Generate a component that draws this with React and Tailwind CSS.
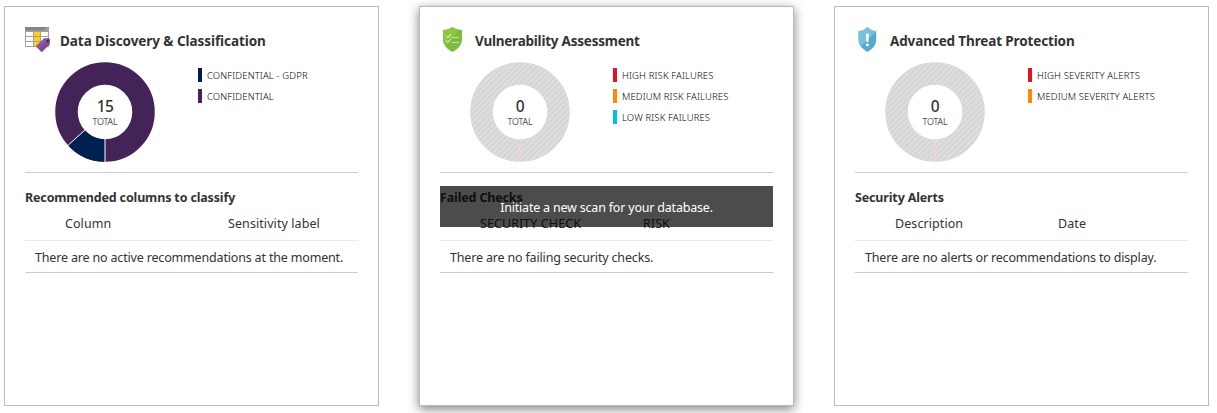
import React from "react";

const PURPLE = "#442359";
const NAVY = "#00204f";

function ClassificationIcon() {
  return (
    <svg className="block h-[26px] w-[26px]" viewBox="0 0 26 26">
      <rect x="0" y="0" width="24" height="20" fill="#a0a1a2" />
      <rect x="0" y="0" width="24" height="3.5" fill="#868686" />
      <path d="M22 0h2v3.5h-5.5z" fill="#a0a1a2" />
      <g fill="#fff">
        <rect x="1" y="5" width="7" height="4" />
        <rect x="1" y="10" width="7" height="4" />
        <rect x="1" y="15" width="7" height="4" />
        <rect x="16" y="5" width="7" height="4" />
        <rect x="16" y="10" width="7" height="4" />
      </g>
      <g fill="#fcd116">
        <rect x="9" y="5" width="6" height="4" />
        <rect x="9" y="10" width="6" height="4" />
        <rect x="9" y="15" width="6" height="4" />
      </g>
      <path d="M11 19.2 19 11.4l4.8-.1 1.2 1.3-.2 4.9-8.2 7.7z" fill="#804998" />
      <path d="M11 19.2 19 11.4l4.8-.1-10.2 10.6z" fill="#8d58a4" />
      <circle cx="22.6" cy="13.9" r="1.2" fill="#3a2148" />
    </svg>
  );
}

function ChecklistShieldIcon() {
  return (
    <svg className="block h-[26px] w-[26px]" viewBox="0 0 26 26">
      <path d="M12.5 0c2.7 2 5.7 2.9 9.5 3v9.5c0 6-4.700 9.700-9.500 12.500C7.700 22.200 3 18.500 3 12.500V3c3.800-.1 6.800-1 9.500-3z" fill="#7fba42" />
      <path d="M12.500 0c1.900 1.400 3.900 2.300 6.300 2.700L5.500 18.500C4 16.800 3 15 3 12.500V3c3.800-.1 6.800-1 9.500-3z" fill="#8dc63f" />
      <g fill="none" stroke="#fff" strokeWidth="1">
        <path d="m6.200 8.800 1.700 1.700 3.300-3.500M6.200 13.600l1.700 1.700 3.300-3.500" />
        <path d="M11.500 10.500H19M11.500 15.500H19" stroke="#c5e1a5" />
      </g>
    </svg>
  );
}

function AlertShieldIcon() {
  return (
    <svg className="block h-[26px] w-[26px]" viewBox="0 0 26 26">
      <path d="M12.500 0c2.400 2.500 5 4.200 8.700 4v8.800c0 6-4.400 9.600-8.700 12.200-4.300-2.600-8.900-6.200-8.900-12.200V4c3.700.2 6.500-1.500 8.900-4z" fill="#56a9d0" />
      <path d="M12.500 0c2.400 2.500 5 4.200 8.700 4L6 19.400c-1.500-1.800-2.400-4-2.400-6.600V4c3.700.2 6.500-1.500 8.900-4z" fill="#76c2de" />
      <path d="M10.900 6.700h3l-.5 8.300h-2z" fill="#fff" />
      <circle cx="12.400" cy="17.700" r="1.500" fill="#fff" />
    </svg>
  );
}

function FilledRing() {
  return (
    <svg className="col-start-1 row-start-1 h-[100px] w-[100px]" viewBox="0 0 100 100">
      <circle cx="50" cy="50" r="38.500" fill="none" stroke={PURPLE} strokeWidth="22.500" />
      <path d="M50 99.750A49.750 49.750 0 0 1 13.030 83.290L29.750 68.230A27.250 27.250 0 0 0 50 77.250z" fill={NAVY} />
      <path d="M50 76.500V100M30.100 67.900 12.700 83.600" stroke="#fff" strokeWidth="1" />
    </svg>
  );
}

function EmptyRing({ id }) {
  return (
    <svg className="col-start-1 row-start-1 h-[100px] w-[100px]" viewBox="0 0 100 100">
      <defs>
        <pattern id={id} width="4" height="4" patternUnits="userSpaceOnUse" patternTransform="rotate(45)">
          <rect width="4" height="4" fill="#d6d6d6" />
          <rect width="1" height="4" fill="#e4e4e4" />
        </pattern>
      </defs>
      <circle cx="50" cy="50" r="38.500" fill="none" stroke={`url(#${id})`} strokeWidth="22.500" />
      <path d="M50 77.200V99.500" stroke="#fbcfd2" strokeWidth="2" />
    </svg>
  );
}

const cards = [
  {
    icon: <ClassificationIcon />,
    title: "Data Discovery & Classification",
    titleClass: "tracking-[-0.060px]",
    ring: <FilledRing />,
    total: "15",
    legend: [
      ["bg-[#00204f]", "CONFIDENTIAL - GDPR"],
      ["bg-[#442359]", "CONFIDENTIAL"],
    ],
    section: "Recommended columns to classify",
    columns: ["Column", "Sensitivity label"],
    empty: "There are no active recommendations at the moment.",
    shadow: "",
  },
  {
    icon: <ChecklistShieldIcon />,
    title: "Vulnerability Assessment",
    titleClass: "tracking-[-0.230px]",
    ring: <EmptyRing id="stripes-va" />,
    total: "0",
    legend: [
      ["bg-[#e81123]", "HIGH RISK FAILURES"],
      ["bg-[#ff8c00]", "MEDIUM RISK FAILURES"],
      ["bg-[#00bcf2]", "LOW RISK FAILURES"],
    ],
    section: "Failed Checks",
    columns: ["SECURITY CHECK", "RISK"],
    empty: "There are no failing security checks.",
    shadow: "shadow-[0_3px_10px_rgba(0,0,0,0.5)]",
    overlay: "Initiate a new scan for your database.",
  },
  {
    icon: <AlertShieldIcon />,
    title: "Advanced Threat Protection",
    titleClass: "tracking-[-0.130px]",
    ring: <EmptyRing id="stripes-atp" />,
    total: "0",
    legend: [
      ["bg-[#e81123]", "HIGH SEVERITY ALERTS"],
      ["bg-[#ff8c00]", "MEDIUM SEVERITY ALERTS"],
    ],
    section: "Security Alerts",
    columns: ["Description", "Date"],
    empty: "There are no alerts or recommendations to display.",
    shadow: "",
  },
];

function Card({ card }) {
  return (
    <section className={`h-[400px] w-[375px] shrink-0 border border-[#bababa] bg-white p-5 ${card.shadow}`}>
      <header className="flex h-[26px] items-center gap-[9px]">
        {card.icon}
        <h2 className={`pt-px text-[13.500px] font-bold leading-[26px] whitespace-nowrap ${card.titleClass}`}>{card.title}</h2>
      </header>
      <div className="mt-[9px] flex h-[111px] border-b border-[#ccc] pl-[30px]">
        <div className="grid h-[100px] w-[100px] place-items-center">
          {card.ring}
          <div className="col-start-1 row-start-1 flex flex-col items-center pt-px">
            <span className="text-[15.500px] font-medium leading-[17px] tracking-[-0.5px]">{card.total}</span>
            <span className="text-[9px] font-light leading-[13px] tracking-[-0.1px] text-black">TOTAL</span>
          </div>
        </div>
        <ul className="ml-[43px] mt-[6px] flex flex-col gap-[7px]">
          {card.legend.map(([color, label]) => (
            <li key={label} className="flex h-[14px] items-center gap-[5px]">
              <span className={`h-[14px] w-[4px] ${color}`} />
              <span className="pt-px text-[9.500px] font-light leading-[15px] whitespace-nowrap tracking-[0.130px] text-black">{label}</span>
            </li>
          ))}
        </ul>
      </div>
      <div className="relative pt-[14px]">
        <h3 className="h-[20px] text-[12.500px] font-bold leading-[22px] whitespace-nowrap tracking-[-0.150px]">{card.section}</h3>
        <div className="flex h-[34px] border-b border-[#eaeaea] pl-10 text-[12.500px] leading-[34px]">
          <span className="w-[163px] tracking-[0.080px]">{card.columns[0]}</span>
          <span className="tracking-[0.080px]">{card.columns[1]}</span>
        </div>
        <p className="h-[32px] border-b border-[#ccc] pl-[10px] text-[12.500px] leading-[34px] whitespace-nowrap tracking-[-0.170px]">{card.empty}</p>
        {card.overlay && (
          <div className="absolute inset-x-0 top-[13px] flex h-[41px] items-center justify-center bg-black/70 pt-[3px] text-[12.500px] tracking-[-0.200px] text-white">
            {card.overlay}
          </div>
        )}
      </div>
    </section>
  );
}

export default function App() {
  return (
    <main className="flex h-[413px] w-[1217px] gap-10 overflow-hidden bg-white pl-1 pt-[6px] font-['Noto_Sans','Open_Sans',sans-serif] text-[#333]">
      {cards.map((card) => (
        <Card key={card.title} card={card} />
      ))}
    </main>
  );
}
